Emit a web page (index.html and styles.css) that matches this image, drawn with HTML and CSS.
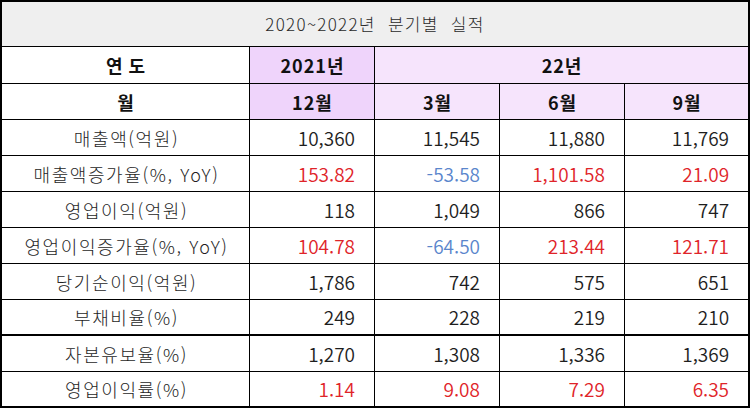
FILE: index.html
```html
<!DOCTYPE html>
<html lang="ko">
<head>
<meta charset="utf-8">
<title>2020~2022년 분기별 실적</title>
<link rel="stylesheet" href="styles.css">
</head>
<body>
<table class="perf">
  <colgroup>
    <col class="c-label">
    <col class="c-num">
    <col class="c-num">
    <col class="c-num">
    <col class="c-last">
  </colgroup>
  <tr class="r-title"><td colspan="5" class="title">2020~2022년&nbsp; 분기별&nbsp; 실적</td></tr>
  <tr class="r-head r-first">
    <th class="h-plain wide">연도</th>
    <th class="h-strong">2021년</th>
    <th class="h-soft last" colspan="3">22년</th>
  </tr>
  <tr class="r-head">
    <th class="h-plain">월</th>
    <th class="h-strong">12월</th>
    <th class="h-soft">3월</th>
    <th class="h-soft">6월</th>
    <th class="h-soft last">9월</th>
  </tr>
  <tr>
    <td class="lbl">매출액(억원)</td>
    <td class="num">10,360</td><td class="num">11,545</td><td class="num">11,880</td><td class="num last">11,769</td>
  </tr>
  <tr>
    <td class="lbl">매출액증가율(%, YoY)</td>
    <td class="num up">153.82</td><td class="num down">-53.58</td><td class="num up">1,101.58</td><td class="num up last">21.09</td>
  </tr>
  <tr>
    <td class="lbl">영업이익(억원)</td>
    <td class="num">118</td><td class="num">1,049</td><td class="num">866</td><td class="num last">747</td>
  </tr>
  <tr>
    <td class="lbl">영업이익증가율(%, YoY)</td>
    <td class="num up">104.78</td><td class="num down">-64.50</td><td class="num up">213.44</td><td class="num up last">121.71</td>
  </tr>
  <tr>
    <td class="lbl">당기순이익(억원)</td>
    <td class="num">1,786</td><td class="num">742</td><td class="num">575</td><td class="num last">651</td>
  </tr>
  <tr class="r-split">
    <td class="lbl">부채비율(%)</td>
    <td class="num">249</td><td class="num">228</td><td class="num">219</td><td class="num last">210</td>
  </tr>
  <tr>
    <td class="lbl">자본유보율(%)</td>
    <td class="num">1,270</td><td class="num">1,308</td><td class="num">1,336</td><td class="num last">1,369</td>
  </tr>
  <tr class="r-end">
    <td class="lbl">영업이익률(%)</td>
    <td class="num up">1.14</td><td class="num up">9.08</td><td class="num up">7.29</td><td class="num up last">6.35</td>
  </tr>
</table>
</body>
</html>
```
FILE: styles.css
```css
html, body {
  margin: 0;
  padding: 0;
  background: #ffffff;
}

.perf {
  width: 750px;
  table-layout: fixed;
  border-collapse: separate;
  border-spacing: 0;
  border: 2px solid #000;
  font-family: "Noto Sans CJK KR", "Noto Sans", sans-serif;
  color: #1e1e1e;
}

.c-label { width: 248px; }
.c-num { width: 125px; }
.c-last { width: 123px; }

.perf td,
.perf th {
  box-sizing: border-box;
  border-right: 1px solid #000;
  border-bottom: 1px solid #000;
  padding: 0;
  height: 36px;
  line-height: 20px;
  white-space: nowrap;
}

.perf .last { border-right: none; }

.r-title td {
  height: 45px;
  background: #efefef;
  text-align: center;
  font-size: 17px;
  font-weight: 300;
  letter-spacing: 1.3px;
  color: #2a2a2a;
  border-right: none;
}

.r-first th { height: 37px; }

.r-head th {
  font-size: 18px;
  font-weight: 700;
  letter-spacing: 1px;
  padding-left: 1px;
  text-align: center;
  color: #111;
}

.r-head th.wide {
  letter-spacing: 6px;
  padding-left: 6px;
}

.h-plain { background: #ffffff; }
.h-strong { background: #efd4fb; }
.h-soft { background: #f6e4fc; }

.lbl {
  text-align: center;
  font-size: 18px;
  font-weight: 300;
  letter-spacing: 1.6px;
  padding-left: 2px !important;
}

.num {
  text-align: right;
  padding-right: 19px !important;
  font-size: 19px;
  font-weight: 350;
  letter-spacing: 0;
}

.up { color: #df2429; }
.down { color: #5a86cc; }

.r-split td { border-bottom: 2px solid #000; }
.r-end td { border-bottom: none; height: 34px; }
```
